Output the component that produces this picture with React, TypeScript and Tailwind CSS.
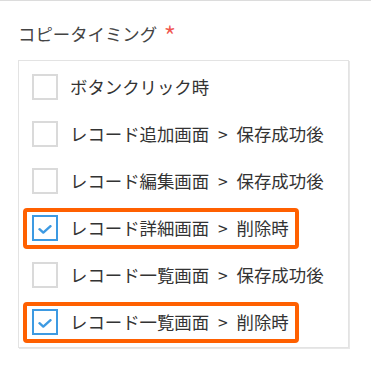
const options = [
  { label: 'ボタンクリック時', checked: false },
  { label: 'レコード追加画面 > 保存成功後', checked: false },
  { label: 'レコード編集画面 > 保存成功後', checked: false },
  { label: 'レコード詳細画面 > 削除時', checked: true },
  { label: 'レコード一覧画面 > 保存成功後', checked: false },
  { label: 'レコード一覧画面 > 削除時', checked: true },
];

function CheckRow({ label, checked }: { label: string; checked: boolean }) {
  return (
    <div
      className={`ml-[4px] flex w-[276px] items-center gap-[12px] rounded-[4px] border-4 pl-[5px] pt-[3px] pb-[4px] ${
        checked ? 'border-[#ff6000]' : 'border-transparent'
      }`}
    >
      <span
        className={`flex h-[26px] w-[26px] shrink-0 items-center justify-center border-2 bg-white ${
          checked ? 'border-[#3d9ae2]' : 'border-[#dadada]'
        }`}
      >
        {checked && (
          <svg width="14" height="9" viewBox="0 0 14 9" className="mt-[2px]" fill="none">
            <path d="M1.5 4.2 L5.3 7.6 L12.5 1.2" stroke="#3d9ae2" strokeWidth="2.4" strokeLinecap="round" strokeLinejoin="round" />
          </svg>
        )}
      </span>
      <span className="whitespace-nowrap text-[17.4px] leading-none text-[#333] [word-spacing:5px]">{label}</span>
    </div>
  );
}

export default function App() {
  return (
    <div
      className="h-[366px] w-[371px] border-t border-[#dcdcdc] bg-white pt-[22px] pl-[18px]"
      style={{ fontFamily: '"Noto Sans CJK JP", "Noto Sans", sans-serif' }}
    >
      <div className="flex h-[22px] items-start gap-[6px] text-[17.4px] leading-[22px] text-[#444]">
        <span>コピータイミング</span>
        <span className="-mt-[2px] text-[30px] font-light leading-none text-[#f0564f]">*</span>
      </div>
      <div className="mt-[15px] flex w-[331px] flex-col gap-[6px] border border-[#e3e3e3] pt-[6px] pb-[4px] shadow-[1px_1px_0_#e8e8e8]">
        {options.map((o) => (
          <CheckRow key={o.label} label={o.label} checked={o.checked} />
        ))}
      </div>
    </div>
  );
}
